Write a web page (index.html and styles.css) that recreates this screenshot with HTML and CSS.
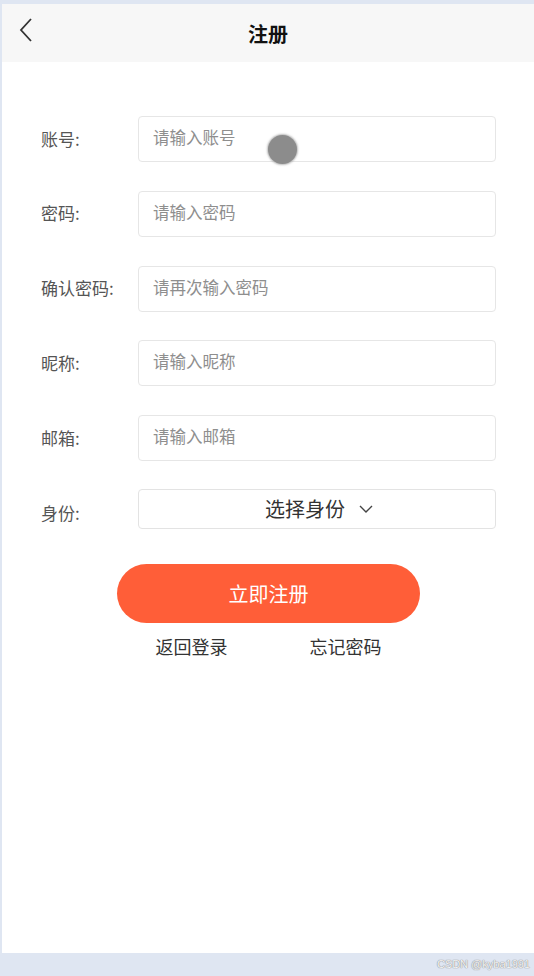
FILE: index.html
```html
<!DOCTYPE html>
<html lang="zh">
<head>
<meta charset="utf-8">
<title>注册</title>
<link rel="stylesheet" href="styles.css">
</head>
<body>
<div class="page">
  <header class="topbar">
    <span class="back">
      <svg width="14" height="24" viewBox="0 0 14 24"><path d="M12 1 L2 12 L12 23" fill="none" stroke="#333" stroke-width="1.8"/></svg>
    </span>
    <h1 class="title">注册</h1>
  </header>
  <main class="form">
    <div class="row"><label class="label">账号:</label><div class="input"><span class="ph">请输入账号</span></div></div>
    <div class="row"><label class="label">密码:</label><div class="input"><span class="ph">请输入密码</span></div></div>
    <div class="row"><label class="label">确认密码:</label><div class="input"><span class="ph">请再次输入密码</span></div></div>
    <div class="row"><label class="label">昵称:</label><div class="input"><span class="ph">请输入昵称</span></div></div>
    <div class="row"><label class="label">邮箱:</label><div class="input"><span class="ph">请输入邮箱</span></div></div>
    <div class="row row-select"><label class="label">身份:</label><div class="select"><span class="sel-text">选择身份</span>
      <svg width="14" height="8" viewBox="0 0 14 8"><path d="M1 1 L7 7 L13 1" fill="none" stroke="#444" stroke-width="1.4"/></svg></div></div>
    <div class="actions">
      <button class="submit">立即注册</button>
      <div class="links"><span class="link">返回登录</span><span class="link">忘记密码</span></div>
    </div>
  </main>
  <span class="touch"></span>
</div>
<div class="watermark">CSDN @kyba1991</div>
</body>
</html>
```
FILE: styles.css
```css
* { box-sizing: border-box; }
html, body { margin: 0; padding: 0; }
body {
  background: #dfe6f2;
  font-family: "Noto Sans CJK SC", "Microsoft YaHei", sans-serif;
  width: 534px;
  height: 976px;
  overflow: hidden;
  position: relative;
}
.page {
  margin: 4px 0 0 2px;
  width: 532px;
  height: 949px;
  background: #fff;
  position: relative;
}
.topbar {
  height: 58px;
  background: #f7f7f7;
  display: flex;
  align-items: center;
  justify-content: center;
  position: relative;
}
.back {
  position: absolute;
  left: 17px;
  top: 14px;
  display: flex;
}
.title {
  margin: 0;
  font-size: 20px;
  font-weight: 700;
  color: #111;
  line-height: 1;
  position: relative;
  top: 1px;
}
.form {
  padding: 54px 36px 0 39px;
  display: flex;
  flex-direction: column;
  gap: 28.8px;
}
.row {
  display: flex;
  align-items: center;
  height: 46px;
}
.label {
  width: 97px;
  font-size: 17px;
  color: #555;
  position: relative;
  top: -1px;
}
.input {
  width: 358px;
  height: 46px;
  border: 1px solid #e6e6e6;
  border-radius: 4px;
  display: flex;
  align-items: center;
  padding-left: 14px;
}
.ph {
  font-size: 16.5px;
  color: #8e8e8e;
  position: relative;
  top: -2px;
}
.row-select {
  height: 40px;
  margin-top: -1px;
}
.row-select .label { top: 4px; }
.select {
  width: 358px;
  height: 40px;
  border: 1px solid #e3e3e3;
  border-radius: 4px;
  display: flex;
  align-items: center;
  justify-content: center;
  gap: 14px;
  padding-left: 4px;
}
.sel-text {
  font-size: 20px;
  color: #333;
}
.actions {
  display: flex;
  flex-direction: column;
  align-items: center;
  margin-top: 6px;
  padding-right: 2px;
}
.submit {
  width: 303px;
  height: 59px;
  border: none;
  border-radius: 30px;
  background: #ff5e38;
  color: #fff;
  font-family: inherit;
  font-size: 20px;
  padding: 0;
}
.links {
  display: flex;
  gap: 82px;
  margin-top: 10px;
}
.link {
  font-size: 18px;
  color: #333;
}
.touch {
  position: absolute;
  left: 266px;
  top: 131px;
  width: 29px;
  height: 29px;
  border-radius: 50%;
  background: #8c8c8c;
  box-shadow: 0 0 2px 1px rgba(140,140,140,0.6);
}
.watermark {
  position: absolute;
  right: 4px;
  bottom: 6px;
  font-family: "Liberation Sans", sans-serif;
  font-size: 11px;
  color: #f4f4f4;
  text-shadow: 0 0 1px #888, 0 0 1px #888;
}
```
